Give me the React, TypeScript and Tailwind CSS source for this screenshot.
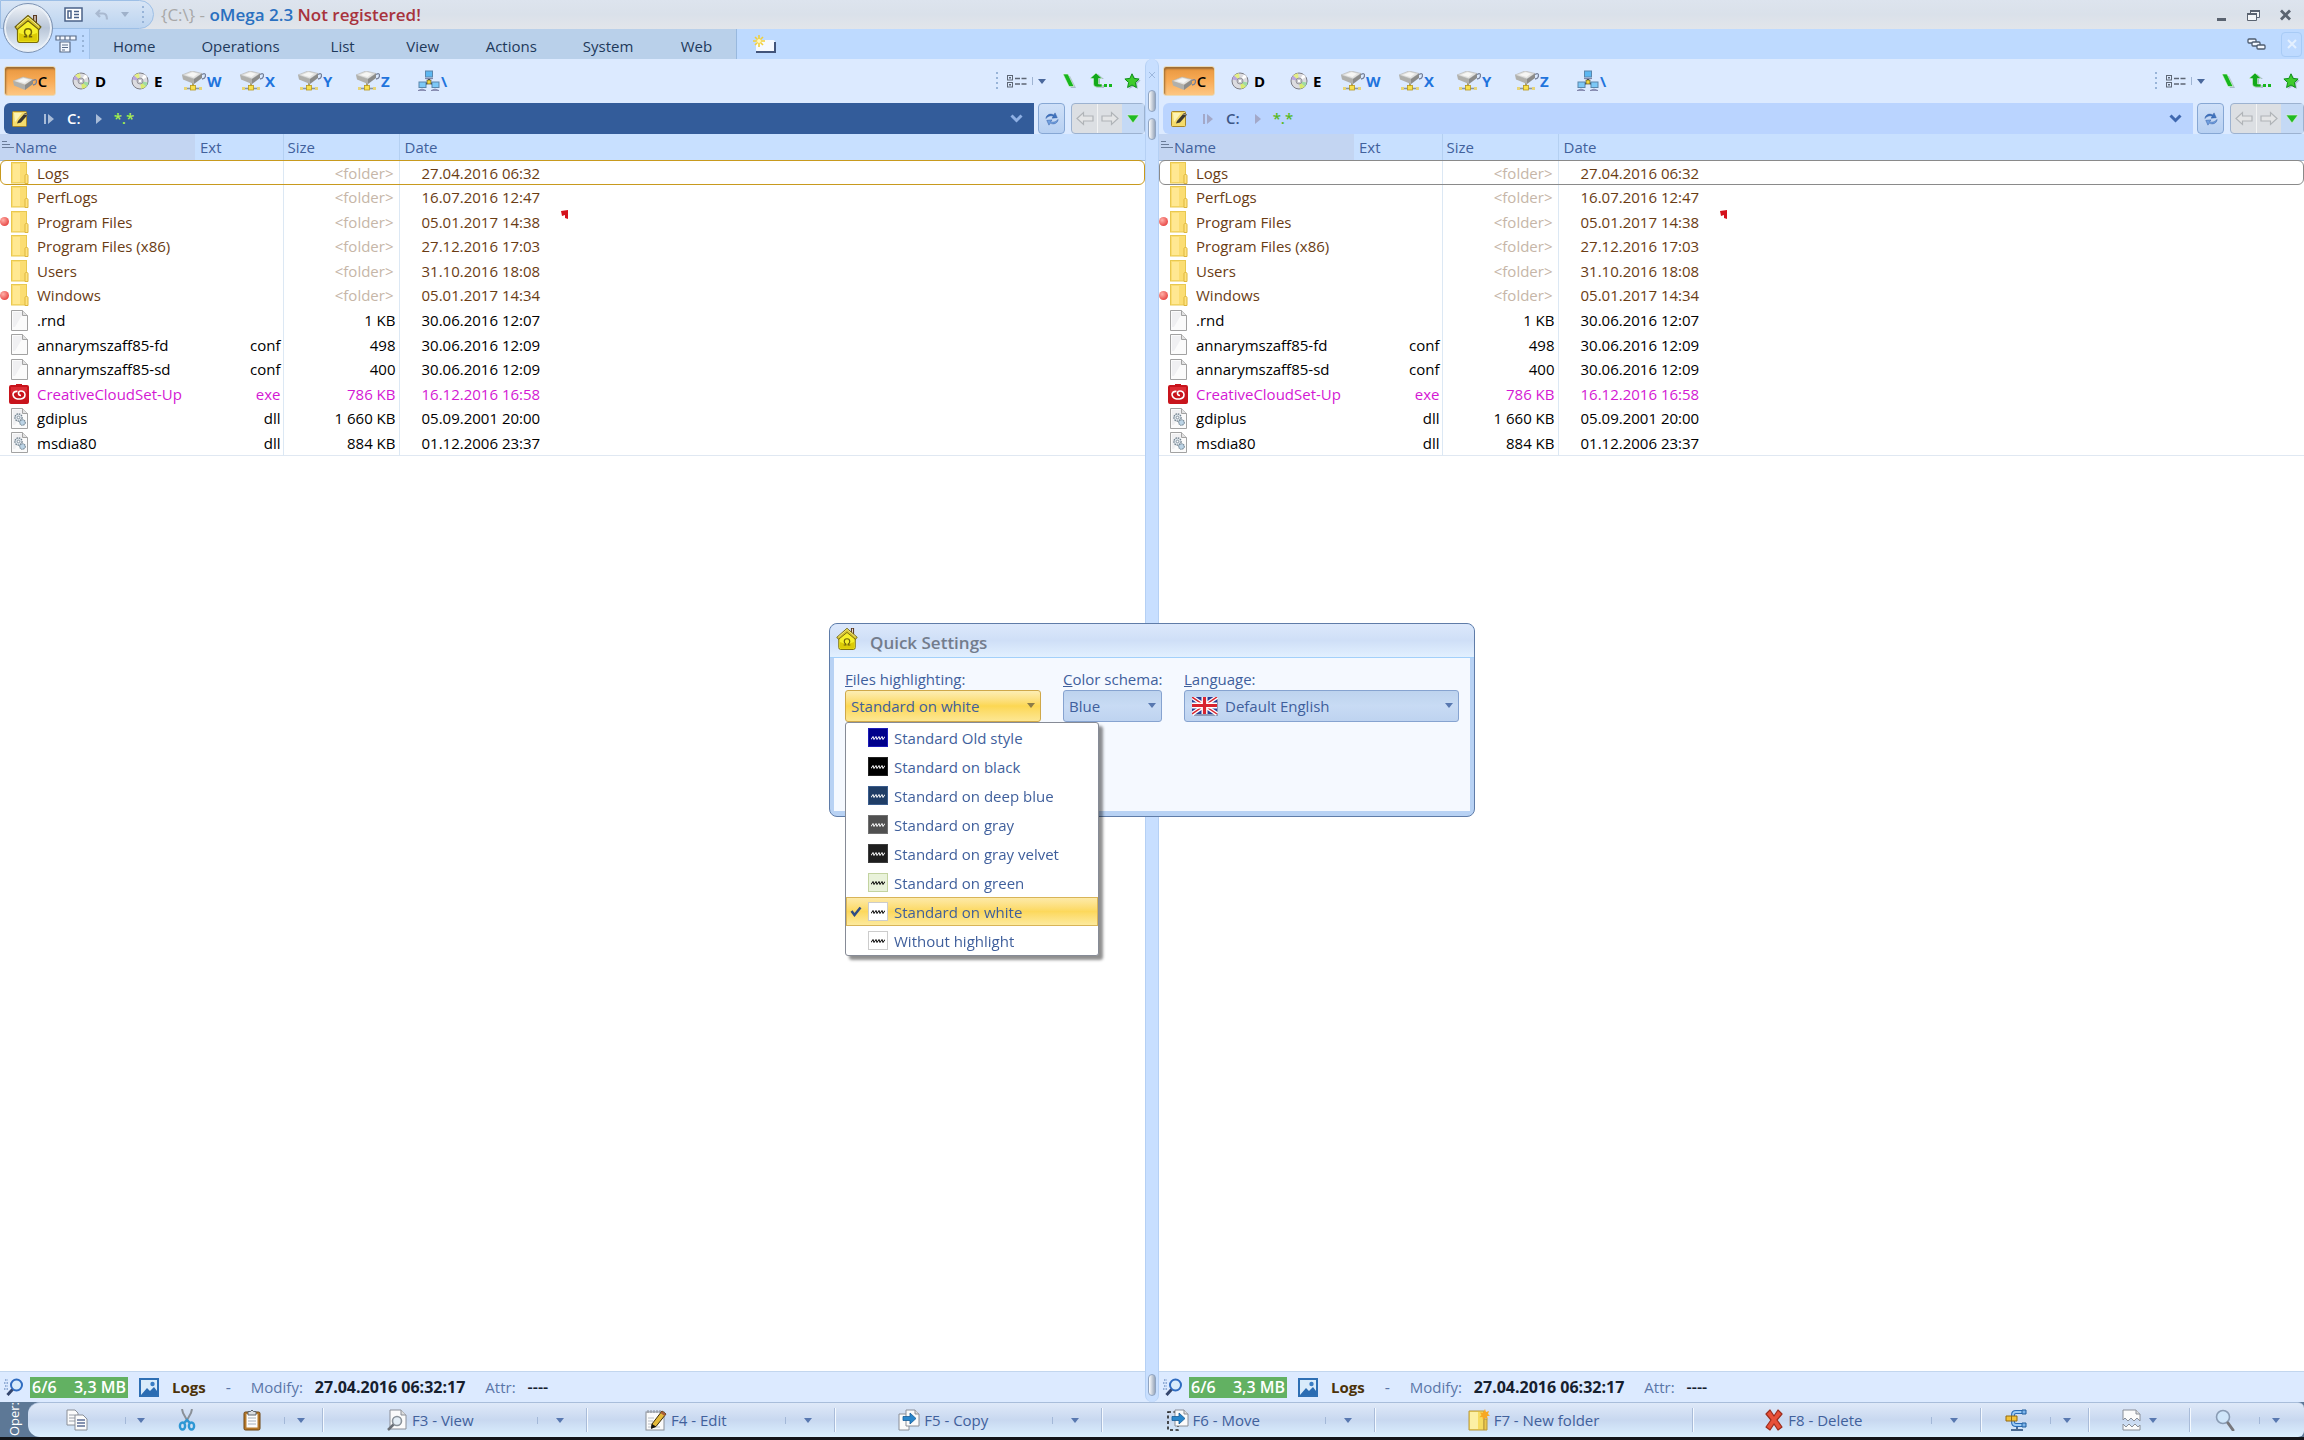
import React from 'react';
import clsx from 'clsx';

const menuTabs = ['Home', 'Operations', 'List', 'View', 'Actions', 'System', 'Web'];

const files = [
  { name: 'Logs', ext: '', size: '<folder>', date: '27.04.2016 06:32', kind: 'folder' },
  { name: 'PerfLogs', ext: '', size: '<folder>', date: '16.07.2016 12:47', kind: 'folder' },
  { name: 'Program Files', ext: '', size: '<folder>', date: '05.01.2017 14:38', kind: 'folder', fresh: true, mark: true },
  { name: 'Program Files (x86)', ext: '', size: '<folder>', date: '27.12.2016 17:03', kind: 'folder' },
  { name: 'Users', ext: '', size: '<folder>', date: '31.10.2016 18:08', kind: 'folder' },
  { name: 'Windows', ext: '', size: '<folder>', date: '05.01.2017 14:34', kind: 'folder', fresh: true },
  { name: '.rnd', ext: '', size: '1 KB', date: '30.06.2016 12:07', kind: 'file' },
  { name: 'annarymszaff85-fd', ext: 'conf', size: '498', date: '30.06.2016 12:09', kind: 'file' },
  { name: 'annarymszaff85-sd', ext: 'conf', size: '400', date: '30.06.2016 12:09', kind: 'file' },
  { name: 'CreativeCloudSet-Up', ext: 'exe', size: '786 KB', date: '16.12.2016 16:58', kind: 'exe' },
  { name: 'gdiplus', ext: 'dll', size: '1 660 KB', date: '05.09.2001 20:00', kind: 'dll' },
  { name: 'msdia80', ext: 'dll', size: '884 KB', date: '01.12.2006 23:37', kind: 'dll' },
];

const schemes = [
  { label: 'Standard Old style', swatch: 'bg-[#00008b] border-[#1c1cb8] text-white' },
  { label: 'Standard on black', swatch: 'bg-black border-[#222222] text-white' },
  { label: 'Standard on deep blue', swatch: 'bg-[#1f3d66] border-[#3a5c8c] text-white' },
  { label: 'Standard on gray', swatch: 'bg-[#505050] border-[#707070] text-white' },
  { label: 'Standard on gray velvet', swatch: 'bg-[#1e1e1e] border-[#3c3c3c] text-white' },
  { label: 'Standard on green', swatch: 'bg-[#e9f2da] border-[#c3d3a0] text-black' },
  { label: 'Standard on white', swatch: 'bg-white border-[#cccccc] text-black', active: true },
  { label: 'Without highlight', swatch: 'bg-white border-[#cccccc] text-black' },
];

/* ---------- icons ---------- */

function HouseIcon({ className }: { className?: string }) {
  return (
    <svg viewBox="0 0 28 29" className={className}>
      <path d="M19 1h4v10l-4-3z" fill="#5a3a22" />
      <path d="M20.300 2h1.400v6l-1.400-1z" fill="#e8dcd2" />
      <path d="M3.500 13v13q0 2.500 2.500 2.500h16q2.500 0 2.500-2.500V13L14 5z" fill="#f6f02a" stroke="#7a6c08" strokeWidth="1.200" />
      <path d="M5 19v7q0 1.500 1.500 1.500h15q1.500 0 1.500-1.500v-7l-9 3z" fill="#dccb06" />
      <path d="M14 1.500L1 13l2.200 2.600L14 6.800l10.800 8.800L27 13z" fill="#d5c22c" stroke="#6b5d10" strokeWidth="1.100" strokeLinejoin="round" />
      <path d="M3 12.500L14 3l11 9.500" fill="none" stroke="#f5ee90" strokeWidth="1" />
      <path d="M9.800 22.800h2.700v-1.300c-1.500-.8-2-2-2-3.200 0-2 1.500-3.500 3.500-3.500s3.500 1.500 3.500 3.500c0 1.200-.5 2.400-2 3.200v1.300h2.700" fill="none" stroke="#6e6208" strokeWidth="1.500" />
    </svg>
  );
}

function Caret({ className }: { className?: string }) {
  return (
    <svg viewBox="0 0 8 5" className={clsx('w-2 h-[5px] shrink-0', className)}>
      <path d="M0 0h8L4 5z" fill="currentColor" />
    </svg>
  );
}

function Grip({ className }: { className?: string }) {
  return (
    <svg viewBox="0 0 4 18" className={clsx('w-1 h-[18px] shrink-0', className)}>
      {[0, 5, 10, 15].map((y) => (
        <rect key={y} x="1" y={y} width="2" height="2" fill="#98b4d8" />
      ))}
    </svg>
  );
}

function DriveIcon({ net }: { net?: boolean }) {
  return (
    <svg viewBox="0 0 24 20" className="w-6 h-5 shrink-0">
      {net && (
        <>
          <path d="M3 17.500h16" stroke="#8b98a0" strokeWidth="1.600" />
          <path d="M11 11v5" stroke="#a8a070" strokeWidth="2" />
          <rect x="8.500" y="14.500" width="5" height="4.500" fill="#f8e04c" stroke="#b8981c" strokeWidth=".8" />
          <rect x="2" y="16" width="3" height="3" fill="#e6d478" />
          <rect x="17" y="16" width="3" height="3" fill="#e6d478" />
        </>
      )}
      <g transform={net ? undefined : 'translate(0 6)'}>
        <path d="M0 4L10 0l10 2.500L12 8z" fill="#e2e2e0" stroke="#b2b2ae" strokeWidth=".6" />
        <path d="M0 4l12 4v5L1 8.500z" fill="#b0b0ac" />
        <path d="M12 8l8-5.500V7l-8 6z" fill="#8c8c8a" />
        <path d="M20 3.500q3.500-2 3.500 1T20 8" fill="none" stroke="#75809a" strokeWidth="1.300" />
        <path d="M4 4l6.500-2.700 5.500 1.500-4.500 3.200z" fill="#f6f6f4" />
      </g>
    </svg>
  );
}

function DiscIcon() {
  return (
    <svg viewBox="0 0 18 18" className="w-[18px] h-[18px] shrink-0">
      <circle cx="9" cy="9" r="8" fill="#dcdce0" stroke="#7c7c84" />
      <path d="M9 9L3 3.500A8 8 0 0 1 8 1.200z" fill="#e4ee86" />
      <path d="M9 9l6 5.500a8 8 0 0 1-5 2.300z" fill="#d8ea6c" />
      <path d="M9 9l7.500 1.500a8 8 0 0 1-1.500 4z" fill="#9fdca2" />
      <path d="M9 9L1.300 7.500A8 8 0 0 1 3 3.500z" fill="#b9a6dc" />
      <path d="M9 9l4-6.800A8 8 0 0 1 16 5z" fill="#fff" />
      <circle cx="9" cy="9" r="3" fill="#c4c4ca" stroke="#8a8a92" strokeWidth=".8" />
      <circle cx="9" cy="9" r="1.200" fill="#fff" />
    </svg>
  );
}

function NetworkIcon() {
  return (
    <svg viewBox="0 0 22 22" className="w-[22px] h-[22px] shrink-0">
      <path d="M11 8v5M6 15l5-3 5 3" stroke="#20303c" strokeWidth="1.600" fill="none" />
      <rect x="9" y="10" width="4" height="4" fill="#f0d443" stroke="#403a10" strokeWidth=".6" />
      <rect x="7.500" y="1" width="7" height="6" fill="#5cb8f2" stroke="#5a86ac" />
      <rect x="1" y="12" width="7" height="5.500" fill="#7cc8f6" stroke="#5a86ac" />
      <rect x="14" y="12" width="7" height="5.500" fill="#7cc8f6" stroke="#5a86ac" />
      <path d="M0 20.500q4-3 8 0zM13 20.500q4-3 8 0z" fill="#9fa3c8" stroke="#6d7198" strokeWidth=".6" />
      <path d="M7 8.500h8" stroke="#7f86a8" strokeWidth="1.200" />
    </svg>
  );
}

function EditIcon() {
  return (
    <svg viewBox="0 0 17 17" className="w-[17px] h-[17px] shrink-0">
      <rect x=".5" y="1.500" width="14" height="15" rx="1" fill="#f5dc6c" stroke="#a8862a" />
      <path d="M2 3h8L3 12z" fill="#fdf3b4" />
      <path d="M6 11l7-8 3 1.500-7 8-4 1z" fill="#3c3830" />
      <path d="M12 4l3.500 1" stroke="#a69c80" />
    </svg>
  );
}

function FileIcon({ kind }: { kind: string }) {
  if (kind === 'folder') {
    return (
      <svg viewBox="0 0 18 22" className="w-[18px] h-[22px]">
        <rect x=".5" y=".5" width="15" height="20.500" fill="#fbdd72" stroke="#e8c850" />
        <path d="M2 2h7v18H2z" fill="#ffe892" />
        <path d="M14 21.500v-8q0-1 1.500-1t1.500 1v8z" fill="#ffe37e" stroke="#deb63c" />
      </svg>
    );
  }
  if (kind === 'exe') {
    return (
      <svg viewBox="0 0 20 20" className="w-5 h-5">
        <path d="M0 3q0-2 2-2h5V0h6v1h5q2 0 2 2v15q0 2-2 2H2q-2 0-2-2z" fill="#c8141c" />
        <path d="M2 3h16v5q-8-3-16 1z" fill="#dc2c34" />
        <path d="M8.500 7.500q-3.500-.5-4.500 2.500 0 4 4.500 5h3q4.500-.5 4.500-4.500-.5-3.500-4-3.500-2.500 0-2.500 2.200t2.500 2.300" fill="none" stroke="#fff" strokeWidth="1.600" />
      </svg>
    );
  }
  return (
    <svg viewBox="0 0 17 21" className="w-[17px] h-[21px]">
      <path d="M.5.500h11l5 5v15H.5z" fill="#fbfbfb" stroke="#a2a2a2" />
      <path d="M2 2h9v3l-7 12H2z" fill="#f0f0f2" />
      <path d="M11.500.500v5h5" fill="#e2e2e2" stroke="#a2a2a2" />
      {kind === 'dll' && (
        <>
          <circle cx="7.500" cy="9.500" r="3.600" fill="#dde4ea" stroke="#71828f" strokeDasharray="1.600 .8" strokeWidth="1.300" />
          <circle cx="7.500" cy="9.500" r="1.300" fill="#fff" stroke="#71828f" strokeWidth=".8" />
          <circle cx="11.500" cy="14.500" r="2.800" fill="#bcd4e6" stroke="#71828f" strokeDasharray="1.400 .7" strokeWidth="1.100" />
        </>
      )}
    </svg>
  );
}

function ListModeIcon() {
  return (
    <svg viewBox="0 0 20 14" className="w-5 h-[14px]" fill="none" stroke="#5d6674">
      <rect x=".5" y="1.500" width="5" height="4.500" />
      <rect x=".5" y="8.500" width="5" height="4.500" />
      <path d="M2 3.800h2M2 10.800h2M8 4.500h5M14.500 4.500h5M8 10h5M14.500 10h5" strokeWidth="1.600" />
    </svg>
  );
}

function RootIcon() {
  return (
    <svg viewBox="0 0 14 16" className="w-[14px] h-4">
      <path d="M3 3h5l6 12H9z" fill="#aabccc" />
      <path d="M1 1h5l6 12.500H7z" fill="#17b61d" stroke="#e8f8e8" strokeWidth=".6" />
    </svg>
  );
}

function UpIcon() {
  return (
    <svg viewBox="0 0 26 18" className="w-[26px] h-[18px]">
      <path d="M3 7L9 2l6 5h-4v6h4v3H9q-3 0-3-3V7z" fill="#aabccc" />
      <path d="M1 6.500L7 1l6 5.500H9.500V12H13v3H8q-3.500 0-3.500-3V6.500z" fill="#13a91a" stroke="#e8f8e8" strokeWidth=".5" />
      <rect x="15" y="12" width="3" height="3" fill="#17b61d" />
      <rect x="20" y="12" width="3" height="3" fill="#17b61d" />
    </svg>
  );
}

function StarIcon() {
  return (
    <svg viewBox="0 0 17 17" className="w-[17px] h-[17px]">
      <path d="M9.500 2l2.200 4.500 5 .7-3.600 3.500.9 5.300-4.500-2.500L5 16z" fill="#aabccc" />
      <path d="M8 .8l2.100 4.600 5 .6-3.700 3.500 1 5L8 12l-4.400 2.500 1-5L.9 6l5-.6z" fill="#3ecb2c" stroke="#0c8f18" />
    </svg>
  );
}

function RefreshIcon() {
  return (
    <svg viewBox="0 0 16 16" className="w-[14px] h-[14px]">
      <path d="M1 7.500C1.500 3 6 1.200 10 3.300L11.500 1 14 6.500 8 7l1.500-2C6.500 3.500 3.500 5 1 7.500z" fill="#3f74c0" stroke="#2b569c" strokeWidth=".5" />
      <path d="M15 8.500c-.5 4.500-5 6.300-9 4.200L4.500 15 2 9.500 8 9l-1.500 2c3 1.500 6 0 8.500-2.500z" fill="#6f9fe0" stroke="#2b569c" strokeWidth=".5" />
    </svg>
  );
}

function ArrowIcon({ flip }: { flip?: boolean }) {
  return (
    <svg viewBox="0 0 18 15" className={clsx('w-[18px] h-[15px]', flip && '-scale-x-100')}>
      <path d="M1 7.500L7.500 1.500v3.500H17v5H7.500v3.500z" fill="#e4e5e6" stroke="#b0b4b8" strokeWidth="1.200" />
    </svg>
  );
}

function SearchSpeedIcon() {
  return (
    <svg viewBox="0 0 20 18" className="w-5 h-[18px] shrink-0">
      <path d="M1 2h3M0 5h4M1 8h3M0 11h4" stroke="#4a73b0" strokeDasharray="1.500 1" />
      <circle cx="12.500" cy="7" r="5.500" fill="#d8ecfb" stroke="#2f6cc0" strokeWidth="2" />
      <path d="M8.500 11.500L3.500 17" stroke="#34466e" strokeWidth="3" />
    </svg>
  );
}

function PictureIcon() {
  return (
    <svg viewBox="0 0 20 19" className="w-5 h-[19px] shrink-0">
      <rect x="1" y="1" width="18" height="17" fill="#d9ebfa" stroke="#2e6fb4" strokeWidth="2" />
      <path d="M2 17l6-7 3 3 4-4 3 4v4z" fill="#2b6cb2" />
      <circle cx="13.500" cy="6" r="2.200" fill="#3a7dc4" />
    </svg>
  );
}

function UkFlag() {
  return (
    <svg viewBox="0 0 26 19" className="w-[26px] h-[19px]">
      <path d="M2 2h24v17H2z" fill="#8d9bb8" />
      <path d="M0 0h25v17H0z" fill="#2b3f94" />
      <path d="M0 0l25 17M25 0L0 17" stroke="#fff" strokeWidth="4" />
      <path d="M0 0l25 17M25 0L0 17" stroke="#d8232e" strokeWidth="1.500" />
      <path d="M12.500 0v17M0 8.500h25" stroke="#fff" strokeWidth="6" />
      <path d="M12.500 0v17M0 8.500h25" stroke="#d8232e" strokeWidth="3.200" />
    </svg>
  );
}

function OpIcon({ name }: { name: string }) {
  const page = { fill: '#fbfbfb', stroke: '#8a8f98' };
  return (
    <svg viewBox="0 0 22 22" className="w-[22px] h-[22px] shrink-0">
      {name === 'duplicate' && (
        <>
          <path d="M1 1h8l3 3v12H1z" {...page} />
          <path d="M3 6h6M3 9h6M3 12h6" stroke="#9aa0aa" />
          <path d="M9 6h8l4 4v11H9z" {...page} />
          <path d="M11 11h8M11 14h8M11 17h8" stroke="#5d6f96" strokeWidth="1.400" />
        </>
      )}
      {name === 'cut' && (
        <>
          <path d="M6 0l1 4 5 9M16 0l-1 4-5 9" stroke="#8a9098" strokeWidth="2" fill="none" />
          <ellipse cx="6.500" cy="17" rx="2.600" ry="3.500" fill="none" stroke="#2e97d4" strokeWidth="2.400" />
          <ellipse cx="15.500" cy="17" rx="2.600" ry="3.500" fill="none" stroke="#2e97d4" strokeWidth="2.400" />
          <path d="M8 14l3-3 3 3" fill="none" stroke="#2e97d4" strokeWidth="2.400" />
        </>
      )}
      {name === 'paste' && (
        <>
          <rect x="3" y="3" width="16" height="18" rx="1.500" fill="#b77a2c" stroke="#6c4412" />
          <rect x="5.500" y="5" width="11" height="13.500" fill="#fdfdfd" />
          <path d="M7 9h8M7 12h8M7 15h8" stroke="#a5b0bc" />
          <path d="M7 2.500h2.500q1.500-3 3 0H15V6H7z" fill="#d9dde2" stroke="#5d646c" />
        </>
      )}
      {name === 'view' && (
        <>
          <path d="M4 1h11l5 5v14H4z" {...page} />
          <path d="M15 1v5h5" fill="#ddd" stroke="#8a8f98" />
          <circle cx="11" cy="12" r="4.500" fill="#e4eef6" stroke="#8a929a" strokeWidth="1.600" />
          <path d="M7.500 15.500L2 21" stroke="#6a6f76" strokeWidth="2.500" />
        </>
      )}
      {name === 'edit' && (
        <>
          <rect x="1" y="3" width="18" height="18" {...page} />
          <path d="M3 1v3M6 1v3M9 1v3M12 1v3M15 1v3" stroke="#8a8f98" />
          <path d="M3 9h6M3 12h5M3 15h9M3 18h12" stroke="#b8bec6" />
          <path d="M7 15L17 2l4 3L11 17.500 6.500 19z" fill="#e4b93a" stroke="#3a2c0c" />
          <path d="M15.500 4L17 2l4 3-1.500 2z" fill="#a85c38" />
          <path d="M7 15l4 2.500L6 20z" fill="#111" />
        </>
      )}
      {(name === 'copy' || name === 'move') && (
        <>
          {name === 'copy' ? (
            <path d="M1 5h10v16H1z" {...page} />
          ) : (
            <path d="M1 3h10v18H1z" fill="none" stroke="#222" strokeWidth="1.600" strokeDasharray="3 2.500" />
          )}
          <path d="M8 1h9l4 4v12H8z" {...page} />
          <path d="M17 1v4h4" fill="#ddd" stroke="#8a8f98" />
          <path d="M5 7.500h7V4l6 5.500-6 5.500v-3.500H5z" fill="#2a87cc" stroke="#155c98" strokeWidth=".8" />
        </>
      )}
      {name === 'newfolder' && (
        <>
          <path d="M1 2h15v19H1z" fill="#f6dc60" stroke="#b8973a" />
          <path d="M2 3h8v17H2z" fill="#fcf0a4" />
          <path d="M16 10h3v11h-3z" fill="#ecc84a" stroke="#b8973a" />
          <path d="M17 0l1 3 3-1-1 3 2 1.500-3 .8 1 3-3-1.500L15 11l-.5-3-3 .3L13.500 6 12 3.500l3 .3z" fill="#f7a823" />
        </>
      )}
      {name === 'delete' && (
        <path d="M4 5l4-4 4 6 4-6 4 4-5 6 5 7-4 3-4-6-4 6-4-3 5-7z" fill="#e85038" stroke="#9c2c1c" strokeWidth="1.200" strokeLinejoin="round" />
      )}
      {name === 'pack' && (
        <>
          <path d="M19 3h-8q-3 0-3 3v7q0 3 3 3h8" fill="none" stroke="#2b6cb8" strokeWidth="4" />
          <path d="M19 3h-8q-3 0-3 3v7q0 3 3 3h8" fill="none" stroke="#9ccbf4" strokeWidth="1.800" />
          <path d="M17 1h4v4h-4zM17 14h4v4h-4z" fill="#7cb4ec" stroke="#1f5c9c" />
          <path d="M1 7h11v5H1z" fill="#f2c23a" stroke="#946a10" />
          <path d="M6.500 7v5" stroke="#946a10" />
          <path d="M12 18v3M6 21h12" stroke="#4d6c94" strokeWidth="2" />
        </>
      )}
      {name === 'split' && (
        <>
          <path d="M2 1h13l4 4v7l-3-3-3 3-3-3-3 3-3-3-2 2z" {...page} />
          <path d="M2 15l3 3 3-3 3 3 3-3 3 3 2-2v5H2z" {...page} />
          <path d="M15 1v4h4" fill="#ddd" stroke="#8a8f98" />
        </>
      )}
      {name === 'search' && (
        <>
          <circle cx="9" cy="8" r="6.500" fill="#cfe6fa" stroke="#8a9cb4" strokeWidth="1.600" />
          <path d="M14 14l5 7" stroke="#77777c" strokeWidth="3" strokeLinecap="round" />
        </>
      )}
    </svg>
  );
}

/* ---------- window chrome ---------- */

function TitleBar() {
  return (
    <header className="relative shrink-0 text-[#1e395b]">
      <div className="flex h-[29px] items-center bg-linear-to-b from-[#dde4ee] via-[#dae1ea] to-[#e2e5ea]">
        <div className="flex h-full w-[154px] shrink-0 items-center gap-3 rounded-r-2xl border border-[#9dbfe6] bg-linear-to-b from-[#d8e5f5] to-[#bcd4f0] pl-[63px]">
          <button type="button" aria-label="Panels">
            <svg viewBox="0 0 19 15" className="w-[19px] h-[15px]" fill="#fff" stroke="#4b6288" strokeWidth="1.500">
              <rect x="1" y="1" width="17" height="13" />
              <path d="M4 4h3v7H4zM10 4.500h5M10 7.500h5M10 10.500h5" />
            </svg>
          </button>
          <button type="button" aria-label="Undo">
            <svg viewBox="0 0 14 12" className="w-[14px] h-3" fill="none" stroke="#a9b9d0" strokeWidth="2.200">
              <path d="M5 1L1.500 4.500 5 8M2 4.500h6q4 0 4 6" />
            </svg>
          </button>
          <button type="button" aria-label="More" className="text-[#9fb1ca]">
            <Caret />
          </button>
          <Grip />
        </div>
        <h1 className="ml-[7px] whitespace-pre text-[17px] font-semibold">
          <span className="font-normal text-[#a8a8a8]">{'{C:\\} - '}</span>
          <span className="text-[#2a70c0]">oMega 2.3 </span>
          <span className="text-[#a8323c]">Not registered!</span>
        </h1>
        <div className="ml-auto flex items-center gap-5 pr-[13px]">
          <button type="button" aria-label="Minimize">
            <svg viewBox="0 0 11 12" className="w-[11px] h-3"><path d="M1 9h9v3H1z" fill="#5a6370" /></svg>
          </button>
          <button type="button" aria-label="Restore">
            <svg viewBox="0 0 13 12" className="w-[13px] h-3" fill="#f4f6f8" stroke="#5a6370">
              <path d="M3.500 1.500h9v7h-9z" /><path d="M.5 4.500h9v7h-9z" /><path d="M0 5h10M3 2h10" strokeWidth="2" />
            </svg>
          </button>
          <button type="button" aria-label="Close">
            <svg viewBox="0 0 11 12" className="w-[11px] h-3"><path d="M1 1.500l9 9M10 1.500l-9 9" stroke="#5a6370" strokeWidth="2.800" /></svg>
          </button>
        </div>
      </div>

      <nav className="flex h-[30px] items-stretch bg-[#bedaff]">
        <div className="flex w-[90px] items-center justify-end gap-1 border-r border-[#a3c3ea] pr-1">
          <button type="button" aria-label="Toolbars">
            <svg viewBox="0 0 22 18" className="w-[22px] h-[18px]" fill="#f4f8ff" stroke="#5a6c88" strokeWidth="1.200">
              <path d="M1 1h20v4H1z" /><path d="M5 7h10v10H5z" /><path d="M7 10h6M7 12.500h6M7 15h3M5 1v4M10 1v4M15 1v4" />
            </svg>
          </button>
          <Grip />
        </div>
        <div className="flex items-stretch border-r border-[#98b8de] bg-[#b9d0ea]">
          {menuTabs.map((tab) => (
            <button key={tab} type="button" className="min-w-[80px] px-[23px] pt-1 text-[15px] leading-6">
              {tab}
            </button>
          ))}
        </div>
        <button type="button" aria-label="New tab" className="ml-4">
          <svg viewBox="0 0 24 18" className="w-6 h-[18px]">
            <rect x="3" y="5" width="19" height="12" rx="2" fill="#f6f9ff" />
            <path d="M3 17h19V7" fill="none" stroke="#42547a" strokeWidth="2" />
            <path d="M6 0v12M0 6h12M2 2l8 8M10 2l-8 8" stroke="#f2cf3a" strokeWidth="1.600" />
            <circle cx="6" cy="6" r="2" fill="#fff7c0" />
          </svg>
        </button>
        <div className="ml-auto flex items-center gap-[15px] pr-[2px]">
          <button type="button" aria-label="Cascade">
            <svg viewBox="0 0 19 12" className="w-[19px] h-3" fill="#f4f8ff" stroke="#4e5c70" strokeWidth="1.300">
              <rect x="1" y="1" width="8" height="4" rx="1" /><rect x="5" y="4" width="8" height="4" rx="1" /><rect x="10" y="7" width="8" height="4" rx="1" />
            </svg>
          </button>
          <button type="button" aria-label="Close tab" className="flex h-[25px] w-[21px] items-center justify-center rounded-sm border border-[#a8cbf6]">
            <svg viewBox="0 0 10 10" className="w-[10px] h-[10px]"><path d="M1 1l8 8M9 1L1 9" stroke="#e4f0ff" strokeWidth="2" /></svg>
          </button>
        </div>
      </nav>

      {/* Application button overlaps both rows */}
      <button type="button" aria-label="oMega menu" className="absolute left-[3px] top-[3px] flex h-[50px] w-[50px] items-center justify-center rounded-full border border-[#7d93b3] bg-linear-to-b from-[#f2f5f9] via-[#b9c6d8] to-[#eef6fd] shadow-[inset_0_0_0_2px_#e9eff6]">
        <HouseIcon className="w-7 h-[29px]" />
      </button>
    </header>
  );
}

/* ---------- file panel ---------- */

function DriveBar() {
  return (
    <div className="flex h-11 shrink-0 items-center justify-between bg-[#dceaff] pl-1 font-bold text-[15px] text-black">
      <div className="flex items-center">
        <button type="button" className="flex h-[30px] w-[52px] items-center justify-center gap-px rounded-[3px] border border-[#e8d9b8] bg-linear-to-b from-[#e8963e] via-[#f8ab56] to-[#fdc681] font-semibold shadow-[inset_1px_2px_2px_#9c6c34]">
          <DriveIcon />C
        </button>
        <button type="button" className="ml-4 flex w-[59px] items-center gap-[5px]"><DiscIcon />D</button>
        <button type="button" className="flex w-[51px] items-center gap-[5px]"><DiscIcon />E</button>
        {['W', 'X', 'Y', 'Z'].map((d) => (
          <button key={d} type="button" className="flex w-[58px] items-center gap-px text-[#1f74dd]"><DriveIcon net />{d}</button>
        ))}
        <button type="button" className="ml-1 flex items-center gap-px text-[#1f74dd]"><NetworkIcon />\</button>
      </div>
      <div className="flex items-center pr-1">
        <Grip className="mr-2" />
        <button type="button" aria-label="List mode"><ListModeIcon /></button>
        <div className="ml-[5px] mr-[5px] h-2 w-px bg-[#9fb4d2]" />
        <button type="button" aria-label="List mode options" className="text-[#4a689c]"><Caret /></button>
        <button type="button" aria-label="Root folder" className="ml-4"><RootIcon /></button>
        <button type="button" aria-label="Parent folder" className="ml-[13px]"><UpIcon /></button>
        <button type="button" aria-label="Favorites" className="ml-[9px]"><StarIcon /></button>
      </div>
    </div>
  );
}

function AddressBar({ active }: { active?: boolean }) {
  return (
    <div className="flex h-[31px] shrink-0 items-stretch bg-[#dceaff] pl-1">
      <div className={clsx('flex grow items-center rounded-l-md pl-2 pr-[11px] font-semibold text-[15px]', active ? 'bg-[#335c9a] text-white' : 'bg-[#bad4ff] text-[#3c5686]')}>
        <button type="button" aria-label="Edit path"><EditIcon /></button>
        <svg viewBox="0 0 10 10" className={clsx('ml-[15px] h-[10px] w-[10px]', active ? 'text-[#a9bcd8]' : 'text-[#a3a8c8]')}>
          <path d="M0 0h2v10H0zM4 0l6 5-6 5z" fill="currentColor" />
        </svg>
        <button type="button" className="ml-[13px]">C:</button>
        <svg viewBox="0 0 6 10" className={clsx('ml-[15px] h-[10px] w-[6px]', active ? 'text-[#a9bcd8]' : 'text-[#a3a8c8]')}>
          <path d="M0 0l6 5-6 5z" fill="currentColor" />
        </svg>
        <button type="button" className={clsx('ml-3', active ? 'text-[#a8f04c]' : 'text-[#58b81c]')}>*.*</button>
        <button type="button" aria-label="Path history" className={clsx('ml-auto', active ? 'text-[#8fb0e4]' : 'text-[#3f68b0]')}>
          <svg viewBox="0 0 13 9" className="w-[13px] h-[9px]"><path d="M1.500 1.500l5 5 5-5" fill="none" stroke="currentColor" strokeWidth="3" /></svg>
        </button>
      </div>
      <button type="button" aria-label="Refresh" className="ml-1 flex w-[27px] items-center justify-center rounded border border-[#86a7d4] bg-linear-to-b from-[#cfe0f8] to-[#b7d0f2]">
        <RefreshIcon />
      </button>
      <div className="ml-[6px] flex items-stretch rounded border border-[#9cb2d0] bg-[#dcdfe3]">
        <button type="button" aria-label="Back" className="w-[26px] flex items-center justify-center border-r border-[#f2f3f4]"><ArrowIcon /></button>
        <button type="button" aria-label="Forward" className="w-6 flex items-center justify-center"><ArrowIcon flip /></button>
        <button type="button" aria-label="Folder history" className="flex w-[22px] items-center justify-center bg-[#c4d9f5]">
          <svg viewBox="0 0 14 10" className="w-[14px] h-[10px]"><path d="M1 1h12L7 9z" fill="#21bb22" stroke="#e4f4e0" strokeWidth=".6" /></svg>
        </button>
      </div>
    </div>
  );
}

function FileTable({ active }: { active?: boolean }) {
  return (
    <table className="h-[322px] w-full table-fixed border-collapse whitespace-nowrap text-[15px] leading-5">
      <colgroup>
        <col className="w-[195px]" />
        <col className="w-[88px]" />
        <col className="w-[116px]" />
        <col className="w-[145px]" />
        <col />
      </colgroup>
      <thead>
        <tr className="h-[26px] border-b border-[#9db4d0] bg-[#c8e0ff] text-left text-[#41619c]">
          <th className="bg-[#c3d5f2] p-0 font-normal">
            <div className="flex items-center">
              <svg viewBox="0 0 14 10" className="mb-1 ml-px w-[14px] h-[10px]" stroke="#6a7c98"><path d="M1 1.500h5M1 4.500h8M1 7.500h12" /></svg>
              Name
            </div>
          </th>
          <th className="border-r border-[#b4d0f2] py-0 pl-[5px] font-normal">Ext</th>
          <th className="border-r border-[#b4d0f2] py-0 pl-1 font-normal">Size</th>
          <th className="py-0 pl-[5px] font-normal">Date</th>
          <th className="p-0" aria-label="Notes" />
        </tr>
      </thead>
      <tbody>
        {files.map((f, i) => (
          <tr
            key={f.name}
            className={clsx(
              'last:border-b last:border-[#e0e8f2]',
              f.kind === 'folder' ? 'text-[#6a3c14]' : f.kind === 'exe' ? 'text-[#d418d4]' : 'text-black',
              i === 0 && 'rounded-md outline-1 -outline-offset-1',
              i === 0 && (active ? 'outline-[#c89a1e]' : 'outline-[#8a8a8a]')
            )}
          >
            <td className="p-0">
              <div className="flex h-[22px] items-center">
                <span className="flex w-[37px] shrink-0 items-center">
                  <span className={clsx('h-[9px] w-[9px] rounded-full', f.fresh && 'bg-radial-[at_35%_35%] from-[#ffb0a8] to-[#e02424]')} />
                  <span className={f.kind === 'exe' ? '' : 'pl-[2px]'}><FileIcon kind={f.kind} /></span>
                </span>
                <span>{f.name}</span>
              </div>
            </td>
            <td className="border-r border-[#dce8f4] py-0 pr-[2px] text-right">{f.ext}</td>
            <td className={clsx('border-r border-[#dce8f4] py-0 text-right', f.kind === 'folder' ? 'pr-[5px] text-[#c6b6a8]' : 'pr-[3px]')}>{f.size}</td>
            <td className="py-0 pl-[22px]">{f.date}</td>
            <td className="p-0 align-top">
              {f.mark && (
                <svg viewBox="0 0 7 9" className="ml-[17px] w-[7px] h-[9px]"><path d="M0 1l7-1v9L4 8V5L1 6z" fill="#d4121c" /></svg>
              )}
            </td>
          </tr>
        ))}
      </tbody>
    </table>
  );
}

function StatusBar() {
  return (
    <div className="flex h-[31px] shrink-0 items-center border-t border-[#c2d6ee] bg-[#dceaff] pl-1 whitespace-nowrap text-base leading-5 text-[#5a76a8]">
      <SearchSpeedIcon />
      <div className="ml-[6px] flex h-[21px] w-[98px] items-center justify-between bg-[#62b162] px-[2px] font-semibold text-white">
        <span>6/6</span>
        <span>3,3 MB</span>
      </div>
      <div className="ml-[11px]"><PictureIcon /></div>
      <span className="ml-[13px] text-[15px] font-bold text-[#4c3208]">Logs</span>
      <span className="ml-5">-</span>
      <span className="ml-5 text-[15px]">Modify:</span>
      <span className="ml-3 font-bold text-[#16202e]">27.04.2016 06:32:17</span>
      <span className="ml-5 text-[15px]">Attr:</span>
      <span className="ml-3 font-semibold text-[#16202e]">----</span>
    </div>
  );
}

function FilePanel({ active }: { active?: boolean }) {
  return (
    <section className="flex min-w-0 flex-1 flex-col bg-white">
      <DriveBar />
      <AddressBar active={active} />
      <div className="grow overflow-hidden">
        <FileTable active={active} />
      </div>
      <StatusBar />
    </section>
  );
}

function Handle() {
  return <div className="h-[22px] w-2 rounded-full border border-[#8fa4c2] bg-linear-to-r from-white to-[#98a6ba]" />;
}

function Splitter() {
  return (
    <div className="flex w-[14px] shrink-0 flex-col items-center rounded-t-full rounded-b-full border-x border-[#b5d0f4] bg-[#c8dfff] pb-[6px]">
      <svg viewBox="0 0 6 6" className="mt-[13px] mb-3 w-[6px] h-[6px] shrink-0"><path d="M0 0l6 6M6 0L0 6" stroke="#9db8de" /></svg>
      <Handle />
      <div className="mt-[6px]"><Handle /></div>
      <div className="mt-auto"><Handle /></div>
    </div>
  );
}

/* ---------- bottom operations bar ---------- */

function OpMenuButton({ label }: { label: string }) {
  return (
    <button type="button" aria-label={label} className="flex w-[49px] shrink-0 items-center text-[#5878b0]">
      <span className="h-[7px] w-px bg-[#a3b8d8]" />
      <Caret className="ml-[18px]" />
    </button>
  );
}

function OpButton({ icon, label }: { icon: string; label: string }) {
  return (
    <button type="button" className="flex grow items-center justify-center gap-1 whitespace-nowrap">
      <OpIcon name={icon} />
      {label}
    </button>
  );
}

function SmallOp({ icon, label }: { icon: string; label: string }) {
  return (
    <>
      <button type="button" aria-label={label} className="flex grow items-center justify-center"><OpIcon name={icon} /></button>
      <button type="button" aria-label={label + ' options'} className="flex w-[38px] items-center text-[#5878b0]">
        <span className="h-[7px] w-px bg-[#a3b8d8]" />
        <Caret className="ml-3" />
      </button>
    </>
  );
}

function OperationsBar() {
  const cell = 'flex min-w-0 basis-0 items-stretch border-r border-[#a9bcd9] shadow-[1px_0_0_#f4f9ff] my-[5px]';
  return (
    <footer className="flex h-[38px] shrink-0 border-b-[3px] border-[#14161a] bg-[#5d7896]">
      <div className="flex w-7 shrink-0 items-center justify-center text-[13px] leading-7 text-white">
        <span className="rotate-180 [writing-mode:vertical-rl]">Oper:</span>
      </div>
      <div className="flex grow rounded-l-xl rounded-r-md border-t border-[#a8bdda] bg-linear-to-b from-[#dfe9f8] via-[#c8d8f0] to-[#dcf0ff] pr-[7px] text-[15px] text-[#41619c] [&_button]:min-w-0">
        <div className={clsx(cell, 'grow-[295]')}>
          <button type="button" aria-label="Copy to clipboard" className="flex w-[97px] items-center justify-center"><OpIcon name="duplicate" /></button>
          <button type="button" aria-label="Clipboard options" className="flex w-[43px] items-center text-[#5878b0]">
            <span className="h-[7px] w-px bg-[#a3b8d8]" />
            <Caret className="ml-[11px]" />
          </button>
          <button type="button" aria-label="Cut" className="flex w-[38px] items-center justify-center"><OpIcon name="cut" /></button>
          <button type="button" aria-label="Paste" className="flex grow items-center justify-center pl-[14px]"><OpIcon name="paste" /></button>
          <button type="button" aria-label="Paste options" className="flex w-[38px] items-center text-[#5878b0]">
            <span className="h-[7px] w-px bg-[#a3b8d8]" />
            <Caret className="ml-3" />
          </button>
        </div>
        <div className={clsx(cell, 'grow-[264]')}><OpButton icon="view" label="F3 - View" /><OpMenuButton label="View options" /></div>
        <div className={clsx(cell, 'grow-[248]')}><OpButton icon="edit" label="F4 - Edit" /><OpMenuButton label="Edit options" /></div>
        <div className={clsx(cell, 'grow-[267]')}><OpButton icon="copy" label="F5 - Copy" /><OpMenuButton label="Copy options" /></div>
        <div className={clsx(cell, 'grow-[273]')}><OpButton icon="move" label="F6 - Move" /><OpMenuButton label="Move options" /></div>
        <div className={clsx(cell, 'grow-[319]')}><OpButton icon="newfolder" label="F7 - New folder" /></div>
        <div className={clsx(cell, 'grow-[288]')}><OpButton icon="delete" label="F8 - Delete" /><OpMenuButton label="Delete options" /></div>
        <div className={clsx(cell, 'grow-[107]')}><SmallOp icon="pack" label="Pack" /></div>
        <div className={clsx(cell, 'grow-[101]')}>
          <button type="button" aria-label="Split file" className="flex grow items-center justify-center gap-[6px] text-[#5878b0]"><OpIcon name="split" /><Caret /></button>
        </div>
        <div className="my-[5px] flex basis-0 grow-[107] items-stretch"><SmallOp icon="search" label="Search" /></div>
      </div>
    </footer>
  );
}

/* ---------- quick settings ---------- */

function QuickSettings() {
  const select = 'h-8 w-full appearance-none rounded-[3px] border text-[#3f5f9c]';
  const blue = 'border-[#86a3d0] bg-linear-to-b from-[#bdd3ee] via-[#c8dbf4] to-[#bed3f0]';
  return (
    <div className="pointer-events-none fixed inset-0 flex items-center justify-center">
      <div role="dialog" aria-labelledby="qs-title" className="pointer-events-auto flex h-[194px] w-[646px] flex-col rounded-lg border border-[#5f7ca8] bg-[#b8d2f4] text-[15px] leading-5 text-[#3f5f9c]">
        <div className="flex h-[34px] shrink-0 items-center gap-3 rounded-t-lg border-b border-[#a3d0fa] bg-linear-to-b from-[#dce8fb] via-[#cfdff7] to-[#e2f0ff] pl-[6px]">
          <HouseIcon className="mb-1 w-[22px] h-[23px]" />
          <h2 id="qs-title" className="pt-1 text-[17px] font-semibold text-[#737c8c]">Quick Settings</h2>
        </div>
        <div className="mx-1 mb-[5px] flex grow items-start bg-[#f5f9ff] px-[11px] pt-[11px]">
          <div className="relative w-[196px]">
            <label htmlFor="files-highlighting" className="mb-px block"><u>F</u>iles highlighting:</label>
            <select id="files-highlighting" defaultValue="Standard on white" className={clsx(select, 'border-[#cfa84a] bg-linear-to-b from-[#fdeeb4] via-[#fcd752] to-[#fde792] pl-[5px]')}>
              {schemes.map((s) => (
                <option key={s.label}>{s.label}</option>
              ))}
            </select>
            <Caret className="pointer-events-none absolute right-[6px] bottom-[14px] text-[#8c7c48]" />

            <ul role="listbox" aria-label="Files highlighting" className="absolute left-0 top-[53px] z-10 w-[254px] rounded-[3px] border border-[#868b96] bg-white shadow-[4px_4px_3px_#00000070]">
              {schemes.map((s) => (
                <li
                  key={s.label}
                  role="option"
                  aria-selected={!!s.active}
                  className={clsx('flex h-[29px] items-center', s.active && 'border border-[#d8b458] bg-linear-to-b from-[#fdeaa8] via-[#fcd85c] to-[#fdea9c]')}
                >
                  <span className={clsx('flex justify-center', s.active ? 'w-[21px] pr-[3px]' : 'w-[22px]')}>
                    {s.active && (
                      <svg viewBox="0 0 12 11" className="w-3 h-[11px]"><path d="M1.500 5l3 4L10.500 1.500" fill="none" stroke="#2f4c84" strokeWidth="2.500" /></svg>
                    )}
                  </span>
                  <span className={clsx('mr-[6px] flex h-[19px] w-5 items-center justify-center border', s.swatch)}>
                    <svg viewBox="0 0 14 4" className="w-[14px] h-1"><path d="M0 3.500l2-3 1 3 2-3 1 3 2-3 1 3 2-3 1 3 2-3" fill="none" stroke="currentColor" /></svg>
                  </span>
                  {s.label}
                </li>
              ))}
            </ul>
          </div>

          <div className="relative ml-[22px] w-[99px]">
            <label htmlFor="color-schema" className="mb-px block whitespace-nowrap"><u>C</u>olor schema:</label>
            <select id="color-schema" className={clsx(select, blue, 'pl-[5px]')}>
              <option>Blue</option>
            </select>
            <Caret className="pointer-events-none absolute right-[6px] bottom-[14px] text-[#5878b0]" />
          </div>

          <div className="relative ml-[22px] grow">
            <label htmlFor="language" className="mb-px block"><u>L</u>anguage:</label>
            <select id="language" className={clsx(select, blue, 'pl-10')}>
              <option>Default English</option>
            </select>
            <span className="pointer-events-none absolute bottom-[6px] left-2"><UkFlag /></span>
            <Caret className="pointer-events-none absolute right-[6px] bottom-[14px] text-[#5878b0]" />
          </div>
        </div>
      </div>
    </div>
  );
}

export default function App() {
  return (
    <div className="flex h-screen flex-col overflow-hidden bg-[#dceaff] font-['Open_Sans','Noto_Sans',sans-serif]">
      <TitleBar />
      <main className="flex min-h-0 grow">
        <FilePanel active />
        <Splitter />
        <FilePanel />
      </main>
      <OperationsBar />
      <QuickSettings />
    </div>
  );
}
